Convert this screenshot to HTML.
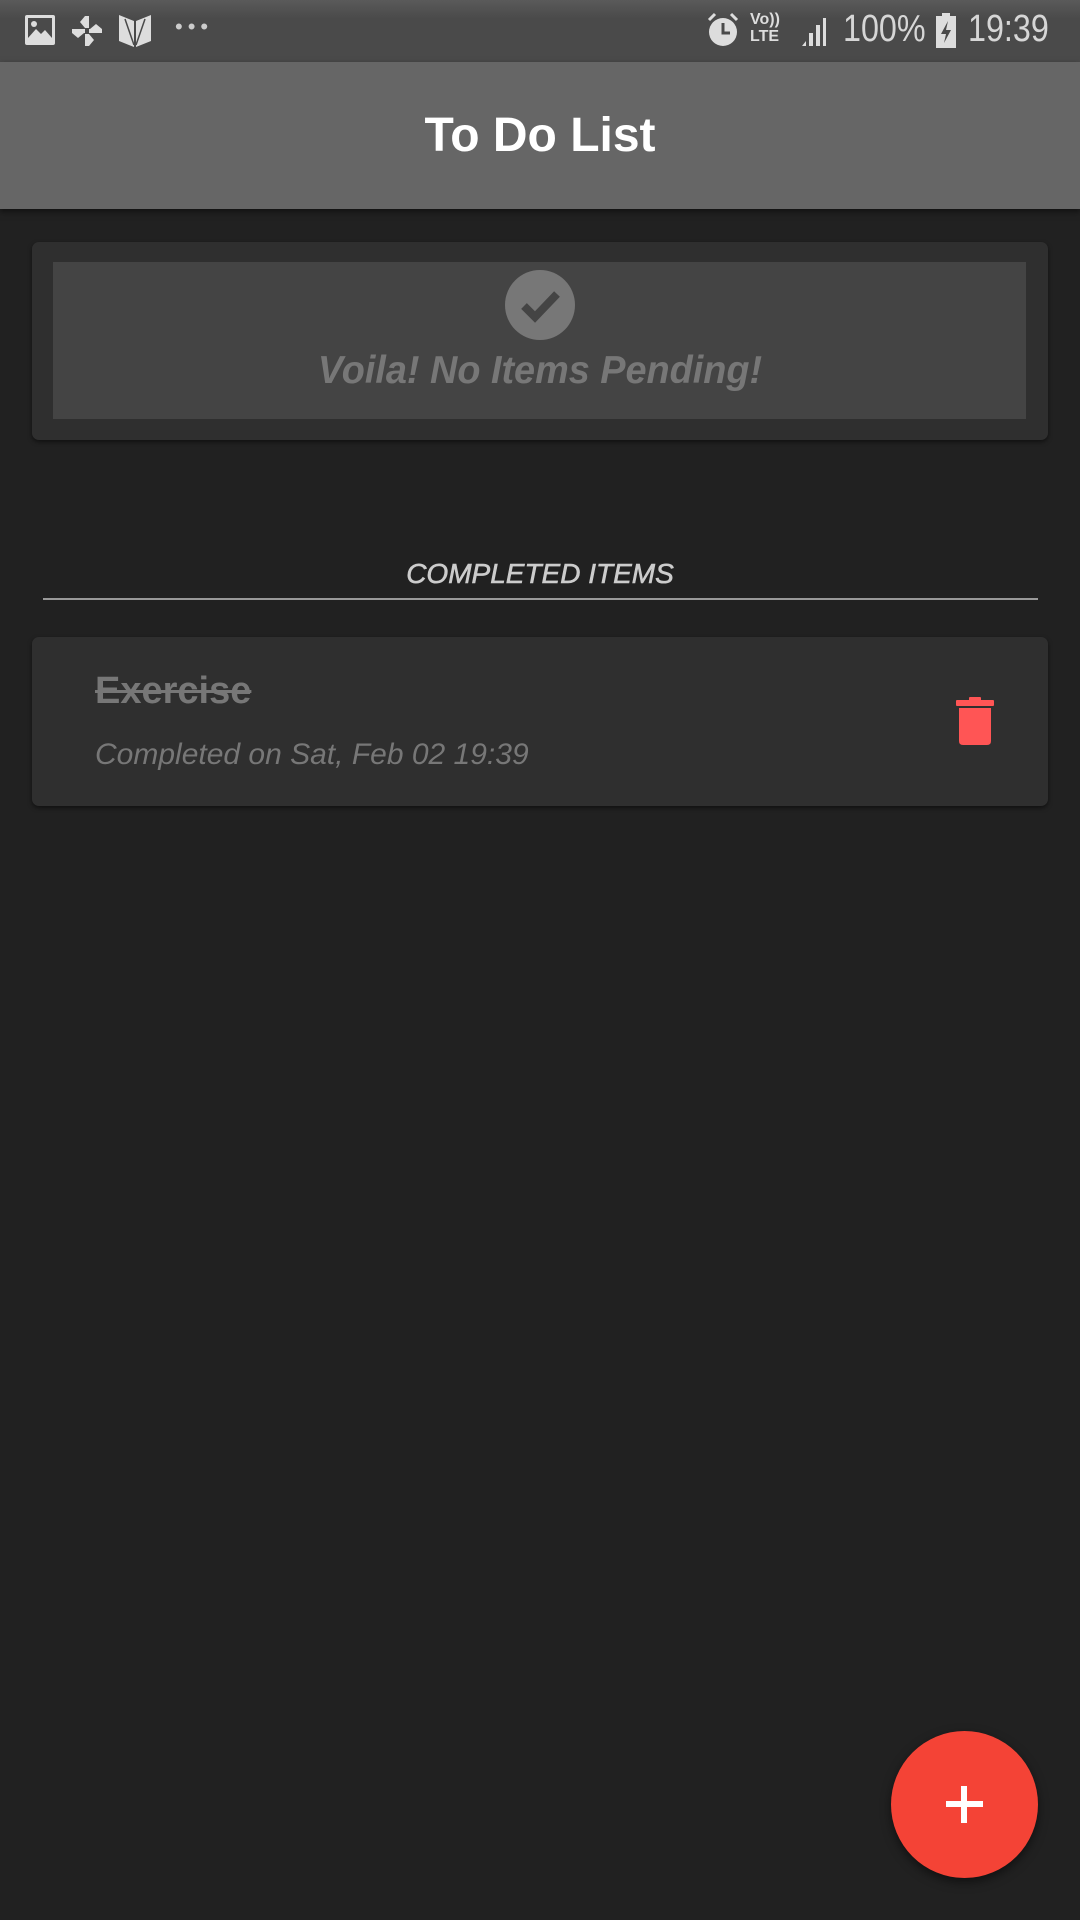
<!DOCTYPE html>
<html><head><meta charset="utf-8"><style>
*{margin:0;padding:0;box-sizing:border-box}
body{width:1080px;height:1920px;background:#212121;font-family:"Liberation Sans",sans-serif;position:relative;overflow:hidden}
.sb{position:absolute;left:0;top:0;width:1080px;height:62px;background:linear-gradient(#5a5a5a,#4a4a4a 30%,#4a4a4a)}
.hd{position:absolute;left:0;top:62px;width:1080px;height:147px;background:#666;box-shadow:0 3px 6px rgba(0,0,0,.5);display:flex;align-items:center;justify-content:center;color:#fff;font-size:48px;font-weight:bold}
.card{position:absolute;left:32px;width:1016px;background:#2f2f2f;border-radius:7px;box-shadow:0 2px 4px rgba(0,0,0,.5)}
.abs{position:absolute}
.it{font-style:italic}
</style></head><body>
<div class="sb">
 <svg class="abs" style="left:24px;top:14px" width="34" height="32" viewBox="0 0 34 32"><rect x="1" y="1" width="30" height="30" rx="2" fill="#ddd"/><rect x="4" y="4" width="24" height="20" fill="#4a4a4a"/><circle cx="10" cy="10" r="3" fill="#ddd"/><path d="M4 24 L12 15 L17 20 L21 16 L28 24Z" fill="#ddd"/></svg>
 <svg class="abs" style="left:70px;top:14px" width="34" height="34" viewBox="0 0 34 34"><path d="M15 2h4v12h-4zM19 15h13v4H19zM15 20h4v12h-4zM2 15h13v4H2z" fill="#ddd"/><path d="M15 2 L10 8 L15 14Z M32 15 L26 10 L20 15Z M19 32 L24 26 L19 20Z M2 19 L8 24 L14 19Z" fill="#ddd"/></svg>
 <svg class="abs" style="left:117px;top:13px" width="36" height="36" viewBox="0 0 36 36"><path d="M2 2 L17 8 V34 L2 28Z M34 2 L19 8 V34 L34 28Z" fill="#ddd"/><path d="M8 6 L17 32 M28 6 L19 32" stroke="#4a4a4a" stroke-width="1.5"/></svg>
 <div class="abs" style="left:175px;top:14px;color:#ccc;font-size:22px;letter-spacing:5px">•••</div>
 <svg class="abs" style="left:706px;top:12px" width="34" height="38" viewBox="0 0 34 38"><circle cx="17" cy="20" r="14" fill="#ddd"/><path d="M17 11v10h7" stroke="#4a4a4a" stroke-width="3" fill="none"/><path d="M3 8 L9 2 M31 8 L25 2" stroke="#ddd" stroke-width="3"/></svg>
 <div class="abs" style="left:750px;top:11px;color:#ddd;font-size:16px;line-height:17px;font-weight:bold">Vo))<br>LTE</div>
 <svg class="abs" style="left:800px;top:16px" width="30" height="32" viewBox="0 0 30 32"><path d="M2 30h4v-5zM9 30h4V17h-4zM16 30h4V9h-4zM23 30h3V2h-3z" fill="#ddd"/></svg>
 <div class="abs" style="left:843px;top:8px;color:#d6d6d6;font-size:38px;transform:scaleX(.85);transform-origin:left">100%</div>
 <svg class="abs" style="left:935px;top:13px" width="22" height="36" viewBox="0 0 22 36"><rect x="7" y="0" width="8" height="4" fill="#ddd"/><rect x="1" y="3" width="20" height="32" fill="#ddd"/><path d="M13 8 L6 21 H11 L9 30 L16 17 H11Z" fill="#4a4a4a"/></svg>
 <div class="abs" style="left:968px;top:8px;color:#d6d6d6;font-size:38px;transform:scaleX(.85);transform-origin:left">19:39</div>
</div>
<div class="hd">To Do List</div>

<div class="card" style="top:242px;height:198px">
 <div class="abs" style="left:21px;top:20px;width:973px;height:157px;background:#444"></div>
 <svg class="abs" style="left:473px;top:28px" width="70" height="70" viewBox="0 0 70 70"><circle cx="35" cy="35" r="35" fill="#777"/><path d="M19 36 L30 47 L52 24" stroke="#444" stroke-width="8" fill="none"/></svg>
 <div class="abs it" style="left:0;width:1016px;top:107px;text-align:center;color:#777;font-size:39px;font-weight:bold;transform:scaleX(.97)">Voila! No Items Pending!</div>
</div>

<div class="abs it" style="left:0;width:1080px;top:558px;text-align:center;color:#ccc;font-size:28px;-webkit-text-stroke:0.6px #ccc">COMPLETED ITEMS</div>
<div class="abs" style="left:43px;top:598px;width:995px;height:2px;background:#999"></div>

<div class="card" style="top:637px;height:169px">
 <div class="abs" style="left:63px;top:33px;color:#777;font-size:38px;font-weight:bold;text-decoration:line-through">Exercise</div>
 <div class="abs it" style="left:63px;top:101px;color:#777;font-size:30px">Completed on Sat, Feb 02 19:39</div>
 <svg class="abs" style="left:924px;top:60px" width="38" height="48" viewBox="0 0 38 48"><rect x="13" y="0" width="12" height="4" rx="1" fill="#f55"/><rect x="0" y="3" width="38" height="6" rx="1" fill="#f55"/><path d="M3 11 H35 V44 Q35 48 31 48 H7 Q3 48 3 44Z" fill="#f55"/></svg>
</div>

<div class="abs" style="left:891px;top:1731px;width:147px;height:147px;border-radius:50%;background:#f44336;box-shadow:0 4px 10px rgba(0,0,0,.5)"></div>
<div class="abs" style="left:946px;top:1801px;width:37px;height:6px;background:#fff"></div>
<div class="abs" style="left:961px;top:1786px;width:6px;height:37px;background:#fff"></div>
</body></html>
